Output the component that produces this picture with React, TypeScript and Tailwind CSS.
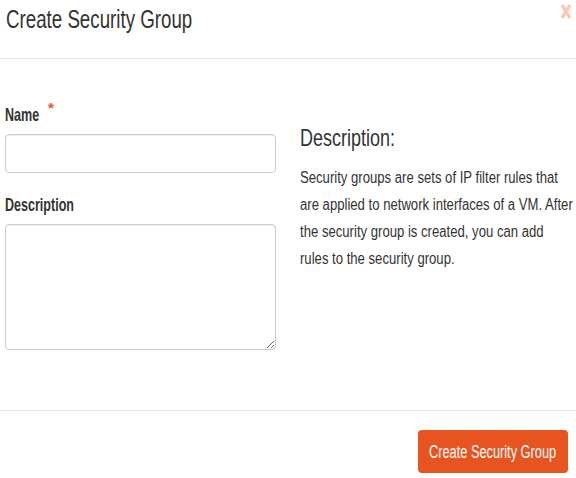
export default function App() {
  return (
    <div
      className="w-[576px] h-[478px] overflow-hidden bg-white text-[#333] flex flex-col"
      style={{ fontFamily: '"Liberation Sans", Arial, sans-serif' }}
    >
      {/* Header */}
      <div className="h-[59px] shrink-0 border-b border-[#e5e5e5] flex items-start justify-between pl-[6px] pr-[4px]">
        <h4 className="pt-[4px] text-[26px] leading-[30px] font-normal text-[#333]">
          <span className="inline-block whitespace-nowrap origin-left scale-x-[0.72]">Create Security Group</span>
        </h4>
        <svg width="12" height="17" viewBox="0 0 12 17" className="mt-[3px]">
          <path d="M2 2 L10 15 M10 2 L2 15" stroke="#f8c9b7" strokeWidth="3.4" strokeLinecap="butt" fill="none" />
        </svg>
      </div>

      {/* Body */}
      <div className="h-[351px] shrink-0 flex pl-[5px]">
        <div className="w-[271px] shrink-0 flex flex-col pt-[45px]">
          <label className="flex items-start h-[22px] mb-[8px]">
            <span className="w-[34px] text-[19px] leading-[22px] font-bold text-[#333]">
              <span className="inline-block whitespace-nowrap origin-left scale-x-[0.66]">Name</span>
            </span>
            <span className="ml-[9px] mt-[-4px] text-[15px] leading-[16px] font-bold text-[#e95420]">*</span>
          </label>
          <input
            type="text"
            className="h-[39px] w-full border border-[#ccc] rounded-[4px] shadow-[inset_0_1px_1px_rgba(0,0,0,0.075)]"
          />
          <label className="mt-[21px] mb-[8px] h-[22px] text-[19px] leading-[22px] font-bold text-[#333]">
            <span className="inline-block whitespace-nowrap origin-left scale-x-[0.66]">Description</span>
          </label>
          <textarea className="h-[126px] w-full border border-[#ccc] rounded-[4px] shadow-[inset_0_1px_1px_rgba(0,0,0,0.075)]" />
        </div>

        <div className="ml-[24px] min-w-0 flex-1 pt-[64px] flex flex-col">
          <h3 className="text-[24px] leading-[30px] font-normal text-[#333] mb-[11px]">
            <span className="inline-block whitespace-nowrap origin-left scale-x-[0.75]">Description:</span>
          </h3>
          <p className="text-[16px] leading-[27px] text-[#333]">
            <span className="inline-block whitespace-nowrap origin-left scale-x-[0.82]">
              Security groups are sets of IP filter rules that
              <br />
              are applied to network interfaces of a VM. After
              <br />
              the security group is created, you can add
              <br />
              rules to the security group.
            </span>
          </p>
        </div>
      </div>

      {/* Footer */}
      <div className="flex-1 border-t border-[#e5e5e5] flex items-start justify-end pr-[8px] pt-[19px]">
        <button className="h-[43px] w-[150px] overflow-hidden flex items-center justify-center bg-[#e8541f] text-white text-[18px] leading-[20px] rounded-[4px]">
          <span className="inline-block whitespace-nowrap scale-x-[0.71] mt-[1px]">Create Security Group</span>
        </button>
      </div>
    </div>
  );
}
